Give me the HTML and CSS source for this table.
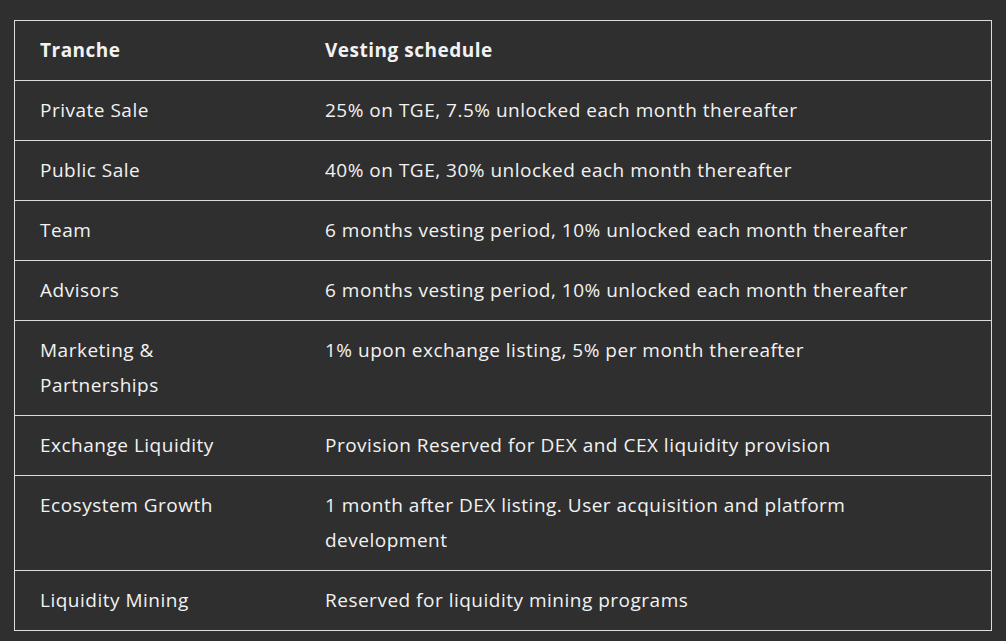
FILE: index.html
```html
<!DOCTYPE html>
<html lang="en">
<head>
<meta charset="utf-8">
<title>Vesting schedule</title>
<link rel="stylesheet" href="styles.css">
</head>
<body>
<main class="page">
  <table class="vesting">
    <thead>
      <tr><th class="col-tranche">Tranche</th><th>Vesting schedule</th></tr>
    </thead>
    <tbody>
      <tr><td>Private Sale</td><td>25% on TGE, 7.5% unlocked each month thereafter</td></tr>
      <tr><td>Public Sale</td><td>40% on TGE, 30% unlocked each month thereafter</td></tr>
      <tr><td>Team</td><td>6 months vesting period, 10% unlocked each month thereafter</td></tr>
      <tr><td>Advisors</td><td>6 months vesting period, 10% unlocked each month thereafter</td></tr>
      <tr><td>Marketing &amp; Partnerships</td><td>1% upon exchange listing, 5% per month thereafter</td></tr>
      <tr><td>Exchange Liquidity</td><td>Provision Reserved for DEX and CEX liquidity provision</td></tr>
      <tr><td>Ecosystem Growth</td><td>1 month after DEX listing. User acquisition and platform development</td></tr>
      <tr><td>Liquidity Mining</td><td>Reserved for liquidity mining programs</td></tr>
    </tbody>
  </table>
</main>
</body>
</html>
```

FILE: styles.css
```css
html, body {
  margin: 0;
  padding: 0;
  background: #2f2f2f;
}
.page {
  padding: 20px 14px;
}
.vesting {
  width: 100%;
  border-collapse: collapse;
  border: 1px solid #dcdcdc;
  font-family: "Open Sans", "Liberation Sans", sans-serif;
  font-size: 19px;
  letter-spacing: 0.5px;
  line-height: 35px;
  color: #f2f2f2;
  table-layout: fixed;
}
.vesting th, .vesting td {
  text-align: left;
  vertical-align: top;
  padding: 12px 25px;
  border-bottom: 1px solid #dcdcdc;
}
.vesting th {
  font-weight: 700;
}
.col-tranche {
  width: 235px;
}
```
